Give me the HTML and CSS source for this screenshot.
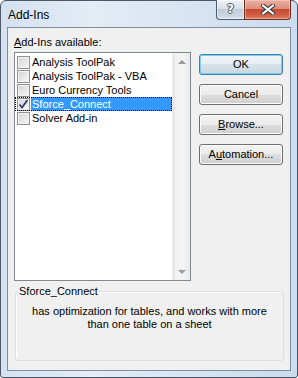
FILE: index.html
```html
<!DOCTYPE html>
<html>
<head>
<meta charset="utf-8">
<link rel="stylesheet" href="styles.css">
</head>
<body>
<div class="window">
  <div class="titlebar">
    <span class="title">Add-Ins</span>
    <div class="caption">
      <div class="cap help"><span class="q">?</span></div>
      <div class="cap close">
        <svg width="14" height="11" viewBox="0 0 14 11">
          <path d="M2 1.5 L12 9.5 M12 1.5 L2 9.5" stroke="#3b3f4a" stroke-width="4.2" stroke-linecap="round"/>
          <path d="M2 1.5 L12 9.5 M12 1.5 L2 9.5" stroke="#ffffff" stroke-width="2.2" stroke-linecap="round"/>
        </svg>
      </div>
    </div>
  </div>
  <div class="client">
    <div class="top">
      <div class="left">
        <div class="label"><u>A</u>dd-Ins available:</div>
        <div class="listbox">
          <ul class="items">
            <li><span class="cb"></span><span class="txt">Analysis ToolPak</span></li>
            <li><span class="cb"></span><span class="txt">Analysis ToolPak - VBA</span></li>
            <li><span class="cb"></span><span class="txt">Euro Currency Tools</span></li>
            <li class="focus"><span class="cb checked"><svg width="11" height="11" viewBox="0 0 11 11"><path d="M1.5 5.5 L4 8.5 L9.5 1" fill="none" stroke="#2b3f78" stroke-width="1.8"/></svg></span><span class="txt sel">Sforce_Connect</span></li>
            <li><span class="cb"></span><span class="txt">Solver Add-in</span></li>
          </ul>
          <div class="scrollbar">
            <div class="arrowbox"><span class="arrow up"></span></div>
            <div class="arrowbox"><span class="arrow down"></span></div>
          </div>
        </div>
      </div>
      <div class="buttons">
        <div class="btn default">OK</div>
        <div class="btn">Cancel</div>
        <div class="btn"><u>B</u>rowse...</div>
        <div class="btn">A<u>u</u>tomation...</div>
      </div>
    </div>
    <fieldset class="group">
      <legend>Sforce_Connect</legend>
      <p class="desc">has optimization for tables, and works with more<br>than one table on a sheet</p>
    </fieldset>
  </div>
</div>
</body>
</html>
```

FILE: styles.css
```css
html, body {
  margin: 0;
  padding: 0;
}
body {
  width: 298px;
  height: 378px;
  background: #ffffff;
  font-family: "Liberation Sans", Arial, sans-serif;
  font-size: 11px;
  color: #000;
  overflow: hidden;
}
.window {
  box-sizing: border-box;
  width: 298px;
  height: 378px;
  border: 1px solid #4b5869;
  border-radius: 6px 6px 3px 3px;
  background: linear-gradient(to right, #d3e1f0 0%, #e4ecf5 30%, #d9e5f2 60%, #cbdcee 100%);
  display: flex;
  flex-direction: column;
  padding: 0 6px 6px 6px;
}
.titlebar {
  height: 26px;
  display: flex;
  align-items: flex-start;
  flex: none;
}
.title {
  padding-top: 7px;
  padding-left: 1px;
  font-size: 12px;
  line-height: 14px;
  color: #000;
}
.caption {
  margin-left: auto;
  margin-top: -1px;
  display: flex;
}
.cap {
  box-sizing: border-box;
  height: 20px;
  display: flex;
  align-items: center;
  justify-content: center;
  border: 1px solid #4c5b70;
  border-top: none;
}
.help {
  width: 28px;
  border-right: none;
  border-radius: 0 0 0 4px;
  background: linear-gradient(to bottom, #eef2f7 0%, #d8e0ea 45%, #c3cdd9 50%, #cad4e0 80%, #d9e2ec 100%);
  box-shadow: inset 0 0 0 1px rgba(255,255,255,0.5);
}
.q {
  font-family: "DejaVu Sans", sans-serif;
  font-weight: bold;
  font-size: 12px;
  line-height: 12px;
  color: #fff;
  margin-top: -1px;
  text-shadow: 1px 0 0 #4a5566, -1px 0 0 #4a5566, 0 1px 0 #4a5566, 0 -1px 0 #4a5566;
}
.close {
  width: 47px;
  border-radius: 0 0 4px 0;
  border-color: #6b2a1e;
  background: linear-gradient(to bottom, #e9b0a2 0%, #dd8e7c 45%, #c84a31 50%, #cf5a3f 75%, #e07f63 100%);
  box-shadow: inset 0 0 0 1px rgba(255,220,210,0.45);
}
.close svg {
  display: block;
  margin-top: -1px;
}
.client {
  flex: 1;
  box-sizing: border-box;
  border: 1px solid #7c8ea4;
  background: #f0f0f0;
  padding: 8px 6px 8px 6px;
  display: flex;
  flex-direction: column;
}
.top {
  display: flex;
  align-items: flex-start;
}
.left {
  width: 177px;
  display: flex;
  flex-direction: column;
}
.label {
  line-height: 13px;
  height: 13px;
}
.listbox {
  margin-top: 3px;
  height: 229px;
  box-sizing: border-box;
  border: 1px solid #828790;
  background: #fff;
  display: flex;
}
.items {
  flex: 1;
  list-style: none;
  margin: 0;
  padding: 2px 0 0 0;
}
.items li {
  display: flex;
  align-items: center;
  height: 14px;
}
.items li.focus {
  outline: 1px dotted #000;
  outline-offset: -1px;
}
.cb {
  box-sizing: border-box;
  width: 13px;
  height: 13px;
  margin-left: 2px;
  margin-right: 1px;
  border: 1px solid #8e8f8f;
  background: linear-gradient(135deg, #d2d2d2 0%, #e6e6e6 50%, #f8f8f8 100%);
  box-shadow: inset 0 0 0 1px #f4f4f4;
  display: flex;
  align-items: center;
  justify-content: center;
  flex: none;
}
.cb svg {
  display: block;
}
.txt {
  flex: 1;
  padding-left: 1px;
  line-height: 14px;
  height: 14px;
  white-space: nowrap;
}
.txt.sel {
  background: #3399ff;
  color: #fff;
}
.scrollbar {
  width: 17px;
  display: flex;
  flex-direction: column;
  justify-content: space-between;
  background: linear-gradient(to right, #e2e2e2 0%, #f1f1f1 15%, #f4f4f4 60%, #eaeaea 100%);
  border-left: 1px solid #ececec;
}
.arrowbox {
  height: 17px;
  display: flex;
  align-items: center;
  justify-content: center;
}
.arrow {
  width: 0;
  height: 0;
  border-left: 4px solid transparent;
  border-right: 4px solid transparent;
}
.arrow.up {
  border-bottom: 4px solid #9a9a9a;
}
.arrow.down {
  border-top: 4px solid #9a9a9a;
}
.buttons {
  margin-left: 8px;
  margin-top: 18px;
  width: 84px;
  display: flex;
  flex-direction: column;
  gap: 9px;
}
.btn {
  box-sizing: border-box;
  height: 21px;
  border: 1px solid #707070;
  border-radius: 3px;
  background: linear-gradient(to bottom, #f2f2f2 0%, #ebebeb 50%, #dddddd 50%, #cfcfcf 100%);
  box-shadow: inset 0 0 0 1px #fcfcfc;
  display: flex;
  align-items: center;
  justify-content: center;
  line-height: 13px;
}
.btn.default {
  border-color: #3c7fb1;
  box-shadow: inset 0 0 0 1px #7ecdf2;
  background: linear-gradient(to bottom, #f0f4f7 0%, #e8eef3 50%, #d8e2ea 50%, #cbd6df 100%);
}
.group {
  margin: 4px 0 0 1px;
  padding: 0 2px;
  height: 76px;
  box-sizing: border-box;
  border: 1px solid #d5dfe5;
  border-radius: 3px;
  box-shadow: inset 1px 1px 0 #ffffff;
  min-width: 0;
}
.group legend {
  padding: 0 1px;
  line-height: 13px;
}
.desc {
  margin: 0;
  padding-top: 7px;
  text-align: center;
  line-height: 13px;
}
```
